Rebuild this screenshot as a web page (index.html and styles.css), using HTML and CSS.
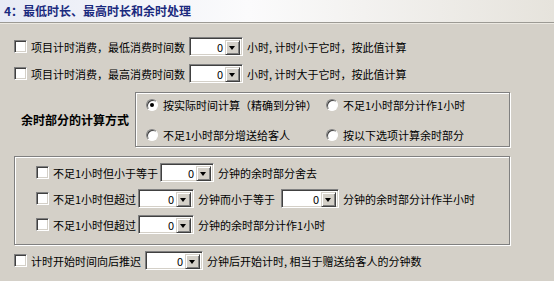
FILE: index.html
```html
<!DOCTYPE html>
<html lang="zh-CN">
<head>
    <meta charset="UTF-8">
    <title>最低时长、最高时长和余时处理</title>
    <link rel="stylesheet" href="styles.css">
</head>
<body>
    <div class="header">4：最低时长、最高时长和余时处理</div>

    <div class="panel">
        <div class="row row-first">
            <span class="check"></span>
            <span class="txt">项目计时消费，最低消费时间数</span>
            <span class="combo"><span class="val">0</span><span class="btn"></span></span>
            <span class="txt">小时, 计时小于它时，按此值计算</span>
        </div>

        <div class="row">
            <span class="check"></span>
            <span class="txt">项目计时消费，最高消费时间数</span>
            <span class="combo"><span class="val">0</span><span class="btn"></span></span>
            <span class="txt">小时, 计时大于它时，按此值计算</span>
        </div>

        <div class="calc">
            <div class="calc-label">余时部分的计算方式</div>
            <div class="group calc-box">
                <div class="radio-row">
                    <span class="radio checked"></span>
                    <span class="txt">按实际时间计算（精确到分钟）</span>
                </div>
                <div class="radio-row">
                    <span class="radio"></span>
                    <span class="txt">不足1小时部分计作1小时</span>
                </div>
                <div class="radio-row">
                    <span class="radio"></span>
                    <span class="txt">不足1小时部分增送给客人</span>
                </div>
                <div class="radio-row">
                    <span class="radio"></span>
                    <span class="txt">按以下选项计算余时部分</span>
                </div>
            </div>
        </div>

        <div class="group rules">
            <div class="row">
                <span class="check"></span>
                <span class="txt">不足1小时但小于等于</span>
                <span class="combo"><span class="val">0</span><span class="btn"></span></span>
                <span class="txt">分钟的余时部分舍去</span>
            </div>
            <div class="row">
                <span class="check"></span>
                <span class="txt">不足1小时但超过</span>
                <span class="combo wide"><span class="val">0</span><span class="btn"></span></span>
                <span class="txt">分钟而小于等于</span>
                <span class="combo wider spaced"><span class="val">0</span><span class="btn"></span></span>
                <span class="txt">分钟的余时部分计作半小时</span>
            </div>
            <div class="row">
                <span class="check"></span>
                <span class="txt">不足1小时但超过</span>
                <span class="combo wide"><span class="val">0</span><span class="btn"></span></span>
                <span class="txt">分钟的余时部分计作1小时</span>
            </div>
        </div>

        <div class="row row-last">
            <span class="check"></span>
            <span class="txt">计时开始时间向后推迟</span>
            <span class="combo wider"><span class="val">0</span><span class="btn"></span></span>
            <span class="txt">分钟后开始计时, 相当于赠送给客人的分钟数</span>
        </div>
    </div>
</body>
</html>
```

FILE: styles.css
```css
body {
    margin: 0;
    width: 554px;
    height: 281px;
    background: #d4d0c8;
    font-family: "Noto Sans CJK SC", "DejaVu Sans", sans-serif;
    font-size: 11px;
    color: #000;
    overflow: hidden;
}
.header {
    height: 22px;
    line-height: 22px;
    padding-left: 4px;
    font-size: 12px;
    font-weight: bold;
    color: #1b2a7e;
    background: linear-gradient(to right, #e8ebf5, #fbfbfc 45%, #e6e3dc);
    border-bottom: 1px solid #9c9a94;
    box-shadow: 0 1px 0 #ece9e2;
}
.panel {
    padding-left: 14px;
}
.row {
    display: flex;
    align-items: center;
    height: 19px;
    margin-top: 8px;
    white-space: nowrap;
}
.row-first {
    margin-top: 14px;
}
.check {
    width: 11px;
    height: 11px;
    background: #fff;
    border: 1px solid;
    border-color: #808080 #fff #fff #808080;
    box-shadow: inset 1px 1px 0 #404040, inset -1px -1px 0 #d4d0c8;
    margin-right: 4px;
    flex: none;
}
.combo {
    display: flex;
    width: 54px;
    height: 19px;
    box-sizing: border-box;
    border: 1px solid;
    border-color: #808080 #fff #fff #808080;
    box-shadow: inset 1px 1px 0 #404040, inset -1px -1px 0 #d4d0c8;
    background: #fff;
    margin: 0 4px;
    padding: 2px;
    flex: none;
}
.combo.wide {
    width: 56px;
}
.combo.wider {
    width: 58px;
}
.combo .val {
    flex: 1;
    text-align: right;
    line-height: 15px;
    padding-right: 2px;
}
.combo .btn {
    width: 15px;
    height: 15px;
    box-sizing: border-box;
    background: #d4d0c8;
    border: 1px solid;
    border-color: #d4d0c8 #404040 #404040 #d4d0c8;
    box-shadow: inset 1px 1px 0 #fff, inset -1px -1px 0 #808080;
    position: relative;
}
.combo .btn::after {
    content: "";
    position: absolute;
    left: 3px;
    top: 5px;
    border-left: 3.5px solid transparent;
    border-right: 3.5px solid transparent;
    border-top: 4px solid #000;
}
.group {
    border: 1px solid #808080;
    box-shadow: inset 1px 1px 0 #fff, 1px 1px 0 #fff;
}
.calc {
    display: flex;
    align-items: center;
    margin-top: 9px;
}
.calc-label {
    width: 114px;
    padding-left: 7px;
    font-size: 12px;
    font-weight: bold;
}
.calc-box {
    width: 363px;
    height: 53px;
    display: grid;
    grid-template-columns: 180px auto;
    align-content: center;
    row-gap: 12px;
    padding-left: 10px;
}
.radio-row {
    display: flex;
    align-items: center;
    height: 18px;
    white-space: nowrap;
}
.radio {
    width: 10px;
    height: 10px;
    border-radius: 50%;
    background: #fff;
    border: 1px solid;
    border-color: #808080 #fff #fff #808080;
    box-shadow: inset 1px 1px 0 #404040;
    margin-right: 5px;
    position: relative;
    flex: none;
}
.radio.checked::after {
    content: "";
    position: absolute;
    left: 3px;
    top: 3px;
    width: 4px;
    height: 4px;
    border-radius: 50%;
    background: #000;
}
.rules {
    width: 473px;
    margin-top: 9px;
    padding: 0 0 10px 21px;
}
.rules .row {
    margin-top: 7px;
}
.rules .row:first-child {
    margin-top: 6px;
}
.rules .combo {
    margin-left: 2px;
}
.rules .combo.spaced {
    margin-left: 6px;
}
.row-last {
    margin-top: 6px;
}
```
